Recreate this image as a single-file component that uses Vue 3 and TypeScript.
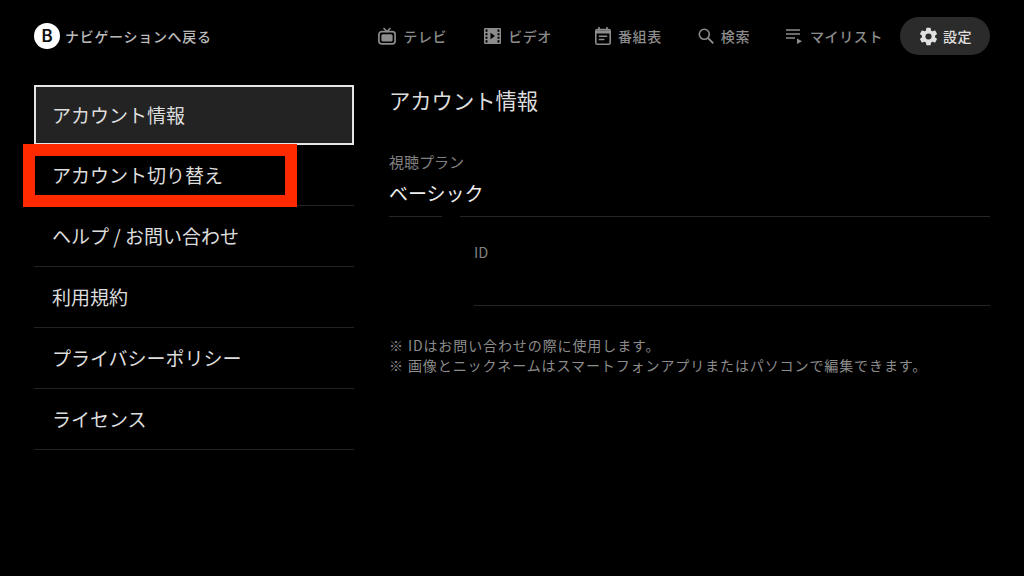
<script setup lang="ts">
const menu: string[] = ['アカウント切り替え', 'ヘルプ / お問い合わせ', '利用規約', 'プライバシーポリシー', 'ライセンス']
</script>

<template>
  <div class="screen">
    <header class="top">
      <div class="back">
        <span class="b">B</span>
        <span>ナビゲーションへ戻る</span>
      </div>
      <nav class="nav">
        <div class="item tv">
          <svg width="18" height="18" viewBox="0 0 18 18" fill="none"><path d="M5.5 1 9 4.600l3.500-3.600" stroke="currentColor" stroke-width="1.500"/><rect x="0.900" y="4.700" width="16.200" height="12.200" rx="2.800" stroke="currentColor" stroke-width="1.700"/><rect x="3.400" y="7.200" width="11.200" height="7.200" rx="1.500" fill="currentColor"/></svg>
          <span>テレビ</span>
        </div>
        <div class="item video">
          <svg width="17" height="16" viewBox="0 0 17 16"><path fill="currentColor" fill-rule="evenodd" d="M1 0h15a1 1 0 0 1 1 1v14a1 1 0 0 1-1 1H1a1 1 0 0 1-1-1V1a1 1 0 0 1 1-1Zm.500 1.600v2.200h2V1.600Zm0 3.600v2.100h2V5.200Zm0 3.500v2.100h2V8.700Zm0 3.500v2.200h2v-2.200Zm12-10.600v2.200h2V1.600Zm0 3.600v2.100h2V5.200Zm0 3.500v2.100h2V8.700Zm0 3.500v2.200h2v-2.200ZM6.500 4.800v6.400L11 8Z"/></svg>
          <span>ビデオ</span>
        </div>
        <div class="item guide">
          <svg width="16" height="18" viewBox="0 0 16 18" fill="none"><rect x="0.800" y="2.600" width="14.400" height="14.600" rx="1.500" stroke="currentColor" stroke-width="1.600"/><path d="M0.800 3.500h14.400v3H0.800z" fill="currentColor"/><path d="M4 0v3.500M12 0v3.500" stroke="currentColor" stroke-width="1.600"/><path d="M3.800 9.300h8.400M3.800 12.500h5.600" stroke="currentColor" stroke-width="1.500"/></svg>
          <span>番組表</span>
        </div>
        <div class="item search">
          <svg width="16" height="16" viewBox="0 0 16 16" fill="none"><circle cx="6.300" cy="6.300" r="5" stroke="currentColor" stroke-width="1.600"/><path d="m10 10 5.300 5.300" stroke="currentColor" stroke-width="1.800"/></svg>
          <span>検索</span>
        </div>
        <div class="item mylist">
          <svg width="16" height="15" viewBox="0 0 16 15" fill="none"><path d="M0 1h14M0 5h14M0 9h9" stroke="currentColor" stroke-width="1.400"/><path d="M11 9.500 16 12.200 11 15Z" fill="currentColor"/></svg>
          <span>マイリスト</span>
        </div>
        <div class="item settings">
          <svg width="21" height="21" viewBox="0 0 24 24"><path fill="currentColor" d="M19.430 12.980c.04-.32.070-.64.070-.98s-.03-.66-.07-.98l2.110-1.650a.5.5 0 0 0 .12-.64l-2-3.460a.5.5 0 0 0-.61-.22l-2.490 1a7.300 7.300 0 0 0-1.690-.98l-.38-2.650A.49.49 0 0 0 14 2h-4a.49.49 0 0 0-.49.420l-.38 2.650c-.61.250-1.170.590-1.690.980l-2.490-1a.49.490 0 0 0-.61.220l-2 3.460a.49.490 0 0 0 .12.640l2.110 1.650c-.04.320-.07.650-.07.980s.03.660.07.980l-2.110 1.650a.5.5 0 0 0-.12.640l2 3.460c.12.220.39.300.61.220l2.490-1c.52.400 1.080.730 1.690.980l.38 2.650c.03.240.24.420.49.420h4c.25 0 .46-.18.49-.42l.38-2.650c.61-.25 1.170-.59 1.690-.98l2.490 1c.23.090.49 0 .61-.22l2-3.460a.5.5 0 0 0-.12-.64ZM12 15.500a3.500 3.500 0 1 1 0-7 3.500 3.500 0 0 1 0 7Z"/></svg>
          <span>設定</span>
        </div>
      </nav>
    </header>

    <main class="body">
      <aside class="side">
        <div class="selected">アカウント情報</div>
        <div v-for="m in menu" :key="m" class="row">{{ m }}</div>
        <div class="mark"></div>
      </aside>
      <section class="content">
        <h1 class="title">アカウント情報</h1>
        <div class="label plan-label">視聴プラン</div>
        <div class="value">ベーシック</div>
        <div class="rule plan-rule"><i></i></div>
        <div class="id-block">
          <div class="id-label">ID</div>
          <div class="rule"></div>
        </div>
        <p class="notes">※ IDはお問い合わせの際に使用します。<br>※ 画像とニックネームはスマートフォンアプリまたはパソコンで編集できます。</p>
      </section>
    </main>
  </div>
</template>

<style>
html, body { margin: 0; background: #000; }
</style>

<style scoped>
.screen {
  width: 1024px;
  height: 576px;
  overflow: hidden;
  background: #000;
  color: #ddd;
  font-family: "Noto Sans CJK JP", "Noto Sans", sans-serif;
}
.top {
  height: 85px;
  box-sizing: border-box;
  padding: 17px 34px 0;
  display: flex;
  justify-content: space-between;
  align-items: flex-start;
}
.back {
  height: 38px;
  display: flex;
  align-items: center;
  gap: 5px;
  font-size: 14px;
  font-weight: 500;
  letter-spacing: 0.7px;
  color: #bbb;
}
.b {
  width: 26px;
  height: 26px;
  border-radius: 50%;
  background: #fff;
  color: #111;
  font: 600 17px/26px "Inter", sans-serif;
  letter-spacing: 0;
  text-align: center;
}
.nav {
  display: flex;
  align-items: center;
  height: 38px;
  color: #8c8c8c;
  font-size: 14px;
  font-weight: 500;
  letter-spacing: 0.6px;
}
.item {
  display: flex;
  align-items: center;
  gap: 7px;
}
.video { margin-left: 37px; }
.guide { margin-left: 43px; }
.search { margin-left: 36px; }
.mylist { margin-left: 36px; gap: 8px; }
.settings {
  margin-left: 17px;
  width: 90px;
  height: 38px;
  box-sizing: border-box;
  padding-left: 18px;
  gap: 4px;
  border-radius: 19px;
  background: #2b2b2b;
  color: #e0e0e0;
}
.body {
  display: flex;
  padding-left: 34px;
}
.side {
  position: relative;
  width: 320px;
}
.selected {
  height: 60px;
  box-sizing: border-box;
  border: 2px solid #e6e6e6;
  background: #232323;
  padding: 0 0 2px 16px;
  display: flex;
  align-items: center;
  font-size: 19px;
  color: #ddd;
}
.row {
  height: 61px;
  box-sizing: border-box;
  padding: 0 0 2px 18px;
  display: flex;
  align-items: center;
  font-size: 19px;
  color: #ddd;
  border-bottom: 1px solid #222;
}
.row:last-of-type { border-bottom-color: transparent; }
.mark {
  position: absolute;
  left: -11px;
  top: 59px;
  width: 274px;
  height: 63px;
  box-sizing: border-box;
  border: 12px solid #ff2a00;
}
.content {
  margin-left: 35px;
  width: 601px;
}
.title {
  margin: 0;
  height: 30px;
  font-size: 21.300px;
  font-weight: 400;
  line-height: 30px;
  color: #ddd;
}
.label {
  font-size: 15px;
  line-height: 20px;
  color: #808080;
}
.plan-label { margin-top: 37px; }
.value {
  margin-top: 8px;
  font-size: 19px;
  line-height: 26px;
  color: #eee;
}
.rule {
  height: 1px;
  background: #262626;
}
.plan-rule {
  margin-top: 10px;
  position: relative;
}
.plan-rule i {
  position: absolute;
  top: 0;
  left: 53px;
  width: 18px;
  height: 1px;
  background: #000;
}
.id-block {
  margin-left: 85px;
  height: 89px;
  display: flex;
  flex-direction: column;
  justify-content: flex-end;
}
.id-label {
  margin-bottom: 43px;
  font-size: 14.500px;
  line-height: 20px;
  color: #808080;
}
.notes {
  margin: 29px 0 0;
  font-size: 14px;
  line-height: 20px;
  letter-spacing: 0.9px;
  color: #8c8c8c;
}
</style>
